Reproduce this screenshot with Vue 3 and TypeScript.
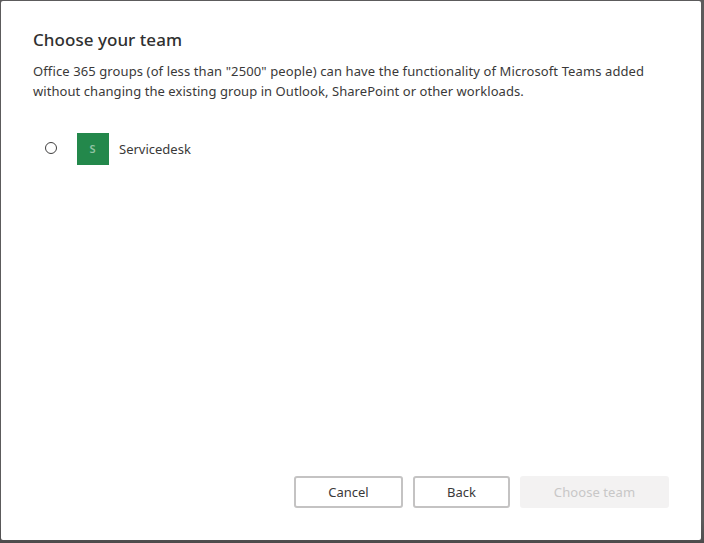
<script setup lang="ts">
import { ref } from 'vue'

interface Team {
  name: string
  initial: string
}

const teams: Team[] = [{ name: 'Servicedesk', initial: 'S' }]
const selected = ref<string | null>(null)
</script>

<template>
  <div class="backdrop">
    <main class="dialog">
      <h1>Choose your team</h1>
      <p class="description">
        <span class="line first">Office 365 groups (of less than "2500" people) can have the functionality of Microsoft Teams added</span>
        <span class="line second">without changing the existing group in Outlook, SharePoint or other workloads.</span>
      </p>
      <label v-for="team in teams" :key="team.name" class="team">
        <input v-model="selected" type="radio" name="team" :value="team.name" />
        <span class="avatar">{{ team.initial }}</span>
        <span class="name">{{ team.name }}</span>
      </label>
      <footer>
        <button class="cancel" type="button">Cancel</button>
        <button class="back" type="button">Back</button>
        <button class="choose" type="button" :disabled="!selected">Choose team</button>
      </footer>
    </main>
  </div>
</template>

<style>
body {
  overflow: hidden;
}
</style>

<style scoped>
.backdrop {
  box-sizing: border-box;
  width: 704px;
  height: 543px;
  padding: 1px 3px 3px 1px;
  background: linear-gradient(#5c5b5c 0, #5c5b5c 520px, #504f50 540px, #4c4a4a 543px);
}
.dialog {
  box-sizing: border-box;
  display: flex;
  flex-direction: column;
  height: 539px;
  padding: 27px 32px 32px;
  border-radius: 2px;
  background: #fff;
  color: #3a3939;
  font-family: "Noto Sans", "Open Sans", sans-serif;
  font-size: 13px;
}
h1 {
  margin: 0;
  font-size: 17px;
  font-weight: 500;
  line-height: 24px;
  letter-spacing: 0.04px;
  color: #303030;
  white-space: nowrap;
}
.description {
  margin: 9px 0 0;
  line-height: 20px;
}
.line {
  display: block;
  width: max-content;
  white-space: nowrap;
}
.first {
  letter-spacing: 0.107px;
}
.second {
  letter-spacing: 0.062px;
}
.team {
  display: flex;
  align-items: center;
  width: max-content;
  height: 32px;
  margin: 32px 0 0 12px;
}
input {
  appearance: none;
  box-sizing: border-box;
  width: 12px;
  height: 12px;
  margin: 0 20px 2px 0;
  border: 1px solid #403f3f;
  border-radius: 50%;
}
input:checked {
  background: #403f3f;
}
.avatar {
  box-sizing: border-box;
  width: 32px;
  height: 32px;
  margin-right: 10px;
  padding-right: 1px;
  background: #23884b;
  color: #91c4a5;
  font-size: 11px;
  font-weight: 600;
  line-height: 32px;
  text-align: center;
}
.name {
  line-height: 20px;
}
footer {
  display: flex;
  justify-content: flex-end;
  gap: 10px;
  margin-top: auto;
}
button {
  box-sizing: border-box;
  height: 32px;
  padding: 0;
  border: 2px solid #c4c3c3;
  border-radius: 3px;
  background: #fff;
  color: #3a3939;
  font: inherit;
}
.cancel {
  width: 109px;
}
.back {
  width: 97px;
}
.choose {
  width: 149px;
  border-color: #f3f2f2;
  background: #f3f2f2;
  color: #c8c7c7;
  letter-spacing: 0.08px;
}
</style>
